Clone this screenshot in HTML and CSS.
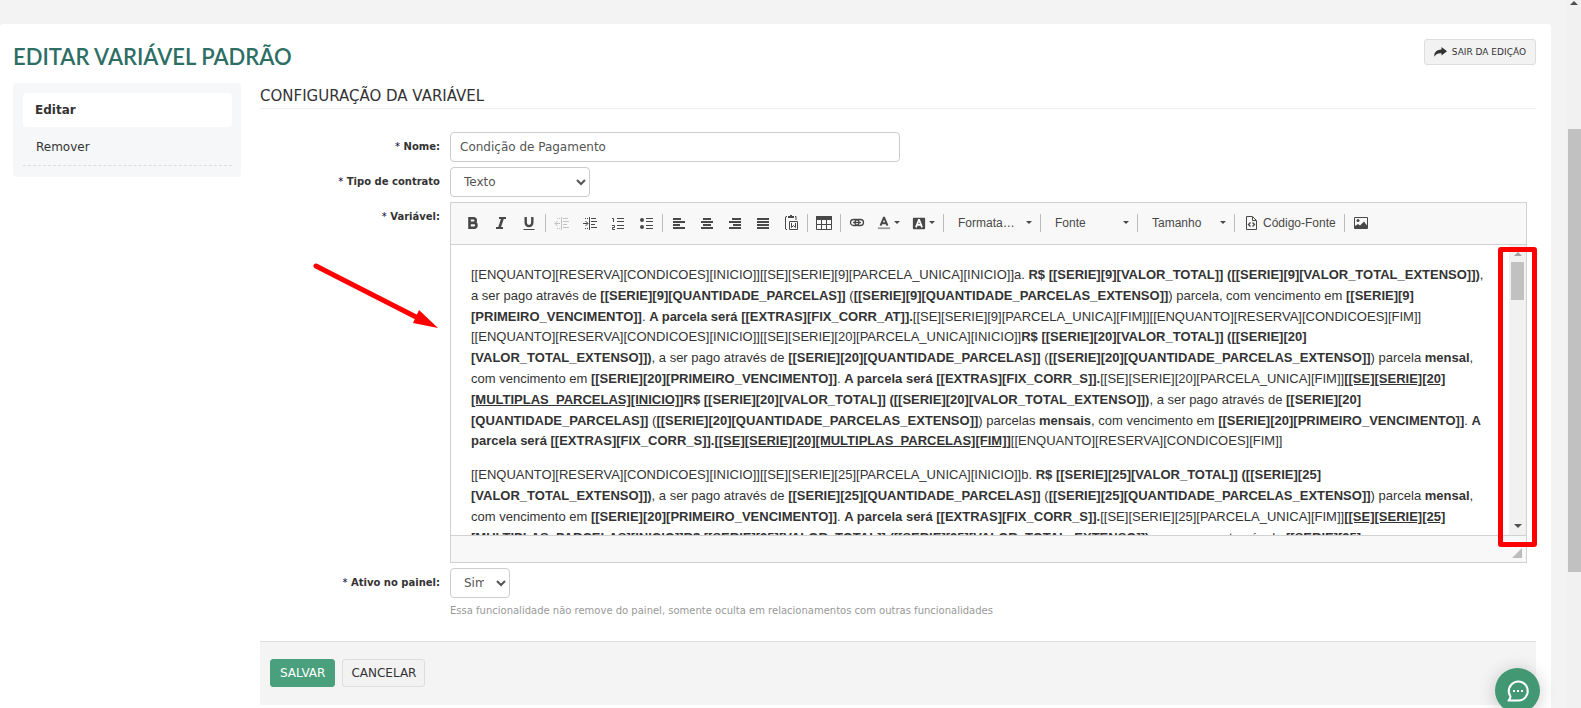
FILE: index.html
```html
<!DOCTYPE html>
<html lang="pt-BR">
<head>
  <meta charset="UTF-8">
  <meta name="viewport" content="width=device-width, initial-scale=1.0">
  <title>Editar variável padrão</title>
  <link rel="stylesheet" href="styles.css">
</head>
<body>
  <div class="page">
    <div class="panel">
      <header class="panel-header">
        <h1>Editar variável padrão</h1>
        <button type="button" class="btn small">
          <svg width="13" height="10" viewBox="0 0 13 10" fill="#333"><path d="M7.500 0L13 4.300L7.500 8.600V6.200C4 6 1.800 7 .4 9.800C-.2 5.500 2.500 2.700 7.500 2.500Z"/></svg>
          SAIR DA EDIÇÃO
        </button>
      </header>

      <div class="columns">
        <!-- Side menu -->
        <nav class="side-menu">
          <a href="#" class="active">Editar</a>
          <a href="#">Remover</a>
        </nav>

        <form class="content">
          <h2>CONFIGURAÇÃO DA VARIÁVEL</h2>

          <div class="form-row">
            <label for="nome"><span class="req">*</span> Nome:</label>
            <input type="text" id="nome" class="field" value="Condição de Pagamento">
          </div>

          <div class="form-row">
            <label for="tipo"><span class="req">*</span> Tipo de contrato</label>
            <select id="tipo" class="field select-type">
              <option>Texto</option>
            </select>
          </div>

          <div class="form-row editor-row">
            <label id="variavel-label"><span class="req">*</span> Variável:</label>
            <div class="editor">
              <!-- Toolbar -->
              <div class="toolbar">
                <button type="button" class="tool" aria-label="Negrito"><svg width="16" height="16" viewBox="0 0 16 16" fill="none" stroke="#484848" stroke-width="2.600"><path d="M4.300 3.300H8.500a2.200 2.200 0 0 1 0 4.500H4.300M4.300 7.900H9a2.400 2.400 0 0 1 0 4.900H4.300M4.500 2v12"/></svg></button>
                <button type="button" class="tool" aria-label="Itálico"><svg width="16" height="16" viewBox="0 0 16 16" fill="none" stroke="#484848" stroke-width="2"><path d="M6 3h7M3 13h7"/><path stroke-width="2.600" d="M9.700 3L6.300 13"/></svg></button>
                <button type="button" class="tool" aria-label="Sublinhado"><svg width="16" height="16" viewBox="0 0 16 16" fill="none" stroke="#484848"><path stroke-width="2.400" d="M4.700 2v5.800a3.300 3.300 0 0 0 6.600 0V2"/><path d="M2.500 14.500h11"/></svg></button>
                <span class="sep"></span>
                <button type="button" class="tool" aria-label="Diminuir recuo" disabled><svg width="16" height="16" viewBox="0 0 16 16" fill="none" stroke="#484848"><path d="M1 8.500h5M3.500 6L1 8.500L3.500 11M7.500 2v13M9 3.500h5M9 6.500h6M9 9.500h4M9 12.500h6"/><path stroke-dasharray="1 1" d="M3 3.500h4M3 13.500h4"/></svg></button>
                <button type="button" class="tool" aria-label="Aumentar recuo"><svg width="16" height="16" viewBox="0 0 16 16" fill="none" stroke="#484848"><path d="M1 8.500h5M3.500 6L6 8.500L3.500 11M7.500 2v13M9 3.500h5M9 6.500h6M9 9.500h4M9 12.500h6"/><path stroke-dasharray="1 1" d="M3 3.500h4M3 13.500h4"/></svg></button>
                <button type="button" class="tool" aria-label="Lista numerada"><svg width="16" height="16" viewBox="0 0 16 16" fill="none" stroke="#484848"><path d="M2 3.500h1.500V7M2 10.500h2.500v2h-2v2H5M7 3.500h7M7 6.500h7M7 10.500h7M7 13.500h7"/></svg></button>
                <button type="button" class="tool" aria-label="Lista com marcadores"><svg width="16" height="16" viewBox="0 0 16 16" fill="none" stroke="#484848"><path d="M8 3.500h7M8 6.500h7M8 10.500h7M8 13.500h7"/><circle cx="4" cy="5" r="2" fill="#484848" stroke="none"/><circle cx="4" cy="12" r="2" fill="#484848" stroke="none"/></svg></button>
                <span class="sep"></span>
                <button type="button" class="tool" aria-label="Alinhar à esquerda"><svg width="16" height="16" viewBox="0 0 16 16" fill="#484848"><path d="M2 3h8v2H2zM2 6h12v2H2zM2 9h7v2H2zM2 12h12v2H2z"/></svg></button>
                <button type="button" class="tool" aria-label="Centralizar"><svg width="16" height="16" viewBox="0 0 16 16" fill="#484848"><path d="M4 3h8v2H4zM2 6h12v2H2zM4 9h8v2H4zM2 12h12v2H2z"/></svg></button>
                <button type="button" class="tool" aria-label="Alinhar à direita"><svg width="16" height="16" viewBox="0 0 16 16" fill="#484848"><path d="M5 3h9v2H5zM2 6h12v2H2zM6 9h8v2H6zM2 12h12v2H2z"/></svg></button>
                <button type="button" class="tool" aria-label="Justificado"><svg width="16" height="16" viewBox="0 0 16 16" fill="#484848"><path d="M2 3h12v2H2zM2 6h12v2H2zM2 9h12v2H2zM2 12h12v2H2z"/></svg></button>
                <button type="button" class="tool" aria-label="Colar do Word"><svg width="16" height="16" viewBox="0 0 16 16" fill="none" stroke="#484848"><path d="M4 1.500H3L2.500 2v12l.5.500h1M12 1.500h1V5M6.500 6.500h8v8h-8zM8.500 8v4.500l2-2l2 2V8"/><path stroke-width="2" d="M5 2h6M7 1h2"/></svg></button>
                <span class="sep"></span>
                <button type="button" class="tool" aria-label="Tabela"><svg width="16" height="16" viewBox="0 0 16 16" fill="none" stroke="#484848"><path d="M.5 2v12.500h15V2M0 9.500h16M5.500 4v10M10.500 4v10"/><path stroke-width="4" d="M0 3h16"/></svg></button>
                <span class="sep"></span>
                <button type="button" class="tool" aria-label="Link"><svg width="16" height="16" viewBox="0 0 16 16" fill="none" stroke="#484848" stroke-width="1.300"><rect x="1.500" y="4.500" width="8.500" height="6" rx="3"/><rect x="6" y="4.500" width="8.500" height="6" rx="3"/><path d="M4 7.500h8"/></svg></button>
                <button type="button" class="tool color" aria-label="Cor do texto"><svg width="16" height="16" viewBox="0 0 16 16"><path fill="none" stroke="#484848" stroke-width="2.200" d="M4 11L7.800 2h.4L12 11M5.300 8.300h5.400"/><path fill="#999" d="M1 13h14v2H1z"/></svg><i class="arrow"></i></button>
                <button type="button" class="tool color" aria-label="Cor de fundo"><svg width="16" height="16" viewBox="0 0 16 16"><rect x="1" y="2" width="14" height="13" rx="1" fill="#484848"/><path fill="none" stroke="#fff" stroke-width="2" d="M4.500 13L7.800 4.500h.4L11.500 13M6 10h4"/></svg><i class="arrow"></i></button>
                <span class="sep"></span>
                <button type="button" class="combo">Formata… <i class="arrow"></i></button>
                <span class="sep"></span>
                <button type="button" class="combo">Fonte <i class="arrow"></i></button>
                <span class="sep"></span>
                <button type="button" class="combo">Tamanho <i class="arrow"></i></button>
                <span class="sep"></span>
                <button type="button" class="tool source"><svg width="16" height="16" viewBox="0 0 16 16" fill="none" stroke="#484848"><path d="M9.500 1.500h-6v13h10v-9zM9.500 2v3.500h3.500"/><path stroke-width="1.400" d="M7.500 7.500l-2 2l2 2M9.500 7.500l2 2l-2 2"/></svg>Código-Fonte</button>
                <span class="sep"></span>
                <button type="button" class="tool" aria-label="Imagem"><svg width="16" height="16" viewBox="0 0 16 16" fill="none" stroke="#484848"><path d="M1.500 2.500h13v11h-13z"/><path fill="#484848" stroke="none" d="M2 13V11l3-2l2 1.500L11 6.500l3 4V13z"/><circle cx="5" cy="5.500" r="1.500" fill="#484848" stroke="none"/></svg></button>
              </div>

              <!-- Editable area -->
              <div class="editor-body">
                <div class="editor-text" contenteditable="true" role="textbox" aria-labelledby="variavel-label" spellcheck="false">
                  <p>[[ENQUANTO][RESERVA][CONDICOES][INICIO]][[SE][SERIE][9][PARCELA_UNICA][INICIO]]a. <b>R$ [[SERIE][9][VALOR_TOTAL]] ([[SERIE][9][VALOR_TOTAL_EXTENSO]])</b>, a ser pago através de <b>[[SERIE][9][QUANTIDADE_PARCELAS]]</b> (<b>[[SERIE][9][QUANTIDADE_PARCELAS_EXTENSO]]</b>) parcela, com vencimento em <b>[[SERIE][9][PRIMEIRO_VENCIMENTO]]</b>. <b>A parcela será [[EXTRAS][FIX_CORR_AT]].</b>[[SE][SERIE][9][PARCELA_UNICA][FIM]][[ENQUANTO][RESERVA][CONDICOES][FIM]]<br>
                  [[ENQUANTO][RESERVA][CONDICOES][INICIO]][[SE][SERIE][20][PARCELA_UNICA][INICIO]]<b>R$ [[SERIE][20][VALOR_TOTAL]] ([[SERIE][20][VALOR_TOTAL_EXTENSO]])</b>, a ser pago através de <b>[[SERIE][20][QUANTIDADE_PARCELAS]]</b> (<b>[[SERIE][20][QUANTIDADE_PARCELAS_EXTENSO]]</b>) parcela <b>mensal</b>, com vencimento em <b>[[SERIE][20][PRIMEIRO_VENCIMENTO]]</b>. <b>A parcela será [[EXTRAS][FIX_CORR_S]].</b>[[SE][SERIE][20][PARCELA_UNICA][FIM]]<b><u>[[SE][SERIE][20][MULTIPLAS_PARCELAS][INICIO]]</u>R$ [[SERIE][20][VALOR_TOTAL]] ([[SERIE][20][VALOR_TOTAL_EXTENSO]])</b>, a ser pago através de <b>[[SERIE][20][QUANTIDADE_PARCELAS]]</b> (<b>[[SERIE][20][QUANTIDADE_PARCELAS_EXTENSO]]</b>) parcelas <b>mensais</b>, com vencimento em <b>[[SERIE][20][PRIMEIRO_VENCIMENTO]]</b>. <b>A parcela será [[EXTRAS][FIX_CORR_S]].<u>[[SE][SERIE][20][MULTIPLAS_PARCELAS][FIM]]</u></b>[[ENQUANTO][RESERVA][CONDICOES][FIM]]</p>
                  <p>[[ENQUANTO][RESERVA][CONDICOES][INICIO]][[SE][SERIE][25][PARCELA_UNICA][INICIO]]b. <b>R$ [[SERIE][25][VALOR_TOTAL]] ([[SERIE][25][VALOR_TOTAL_EXTENSO]])</b>, a ser pago através de <b>[[SERIE][25][QUANTIDADE_PARCELAS]]</b> (<b>[[SERIE][25][QUANTIDADE_PARCELAS_EXTENSO]]</b>) parcela <b>mensal</b>, com vencimento em <b>[[SERIE][20][PRIMEIRO_VENCIMENTO]]</b>. <b>A parcela será [[EXTRAS][FIX_CORR_S]].</b>[[SE][SERIE][25][PARCELA_UNICA][FIM]]<b><u>[[SE][SERIE][25][MULTIPLAS_PARCELAS][INICIO]]</u>R$ [[SERIE][25][VALOR_TOTAL]] ([[SERIE][25][VALOR_TOTAL_EXTENSO]])</b>, a ser pago através de <b>[[SERIE][25]</b></p>
                </div>
                <div class="scrollbar" aria-hidden="true">
                  <span class="scroll-up"></span>
                  <span class="scroll-thumb"></span>
                  <span class="scroll-down"></span>
                </div>
              </div>
              <div class="editor-bottom"><span class="resizer"></span></div>

              <div class="highlight"></div>
            </div>
            <svg class="pointer" width="130" height="72" viewBox="0 0 130 72"><path d="M6 6L108 58" stroke="#f00" stroke-width="5" stroke-linecap="round"/><path d="M109 50L128 68L103 63Z" fill="#f00"/></svg>
          </div>

          <div class="form-row">
            <label for="ativo"><span class="req">*</span> Ativo no painel:</label>
            <div>
              <select id="ativo" class="field select-active">
                <option>Sim</option>
              </select>
              <p class="help">Essa funcionalidade não remove do painel, somente oculta em relacionamentos com outras funcionalidades</p>
            </div>
          </div>

          <div class="form-actions">
            <button type="submit" class="btn primary">SALVAR</button>
            <button type="button" class="btn">CANCELAR</button>
          </div>
        </form>
      </div>
    </div>
  </div>

  <div class="scrollbar page-scrollbar" aria-hidden="true">
    <span class="scroll-up"></span>
    <span class="scroll-thumb"></span>
  </div>

  <button type="button" class="chat" aria-label="Chat">
    <svg width="24" height="24" viewBox="0 0 24 24" fill="none" stroke="#fff" stroke-width="2"><path d="M2.500 21.500H12.500A9.500 9.500 0 1 0 4.500 17.500Q4.500 19.500 2.500 21.500Z" stroke-linejoin="round"/><path d="M7 12h2M11 12h2M15 12h2"/></svg>
  </button>
</body>
</html>
```
FILE: styles.css
```css
* {
  box-sizing: border-box;
}
body {
  display: flex;
  height: 100vh;
  margin: 0;
  overflow: hidden;
  background-color: #f3f3f3;
  color: #333;
  font-family: Verdana, "DejaVu Sans", sans-serif;
  font-size: 12px;
}
button, input, select {
  font-family: inherit;
}
.page {
  flex: 1;
  min-width: 0;
  padding: 24px 15px 0 0;
}
.panel {
  min-height: 100%;
  padding: 15px 15px 8px 13px;
  background-color: #fff;
  border-radius: 4px;
}
.panel-header {
  display: flex;
  justify-content: space-between;
  align-items: flex-start;
  height: 44px;
}
h1 {
  margin: 0;
  padding-top: 3px;
  color: #2d6e65;
  font-family: Lato, sans-serif;
  font-size: 22px;
  font-weight: 600;
  line-height: 30px;
  text-transform: uppercase;
}
.btn {
  height: 28px;
  padding: 0 8px;
  background-color: #f2f2f2;
  color: #333;
  border: 1px solid #ddd;
  border-radius: 3px;
  font-size: 12px;
  cursor: pointer;
}
.btn.small {
  display: flex;
  align-items: center;
  gap: 5px;
  height: 26px;
  padding: 0 9px;
  font-size: 9px;
}
.btn.primary {
  padding: 0 9px;
  background-color: #4aa07c;
  border-color: #4aa07c;
  color: #fff;
}
.columns {
  display: flex;
  align-items: flex-start;
  gap: 19px;
}

/* Side menu */
.side-menu {
  width: 228px;
  padding: 10px 9px 11px 10px;
  background-color: #f5f7f9;
  border-radius: 4px;
}
.side-menu a {
  display: block;
  padding: 2px 13px 0;
  color: #333;
  line-height: 36px;
  text-decoration: none;
  border-bottom: 1px dashed #ddd;
}
.side-menu .active {
  padding: 0 12px;
  background-color: #fff;
  border: none;
  border-radius: 4px;
  font-weight: bold;
  line-height: 34px;
}

/* Form */
.content {
  flex: 1;
  min-width: 0;
}
h2 {
  margin: 0 0 23px;
  padding: 3px 0 2px;
  border-bottom: 1px solid #eee;
  font-size: 15px;
  font-weight: normal;
  line-height: 20px;
}
.form-row {
  display: grid;
  grid-template-columns: 180px 1fr;
  column-gap: 10px;
  margin-bottom: 5px;
}
.form-row label {
  padding-top: 9px;
  font-size: 10px;
  font-weight: bold;
  line-height: 12px;
  text-align: right;
}
.req {
  color: #003;
  font-weight: normal;
}
.field {
  display: block;
  width: 450px;
  height: 30px;
  padding: 0 9px;
  background-color: #fff;
  color: #555;
  border: 1px solid #ccc;
  border-radius: 4px;
  font-size: 12px;
}
.select-type {
  width: 140px;
}
.select-active {
  width: 60px;
}
.help {
  margin: 6px 0 0;
  color: #999;
  font-size: 10px;
  line-height: 14px;
}
.form-actions {
  display: flex;
  gap: 7px;
  margin-top: 23px;
  padding: 17px 10px 18px;
  background-color: #f4f4f4;
  border-top: 1px solid #ddd;
}

/* Editor */
.editor-row {
  position: relative;
}
.editor {
  position: relative;
  min-width: 0;
  margin-right: 9px;
  border: 1px solid #d1d1d1;
}
.toolbar {
  display: flex;
  align-items: center;
  height: 42px;
  padding: 0 8px 2px;
  background-color: #f8f8f8;
  border-bottom: 1px solid #d1d1d1;
}
.tool, .combo {
  display: flex;
  align-items: center;
  flex: none;
  height: 28px;
  padding: 0 6px;
  background: none;
  color: #484848;
  border: none;
  font-family: Arial, "Liberation Sans", sans-serif;
  font-size: 12px;
}
.tool:disabled {
  opacity: 0.3;
}
.tool.color {
  gap: 3px;
  width: 35px;
}
.tool.source {
  gap: 4px;
  width: 105px;
  white-space: nowrap;
}
.combo {
  justify-content: space-between;
  width: 92px;
  padding: 0 6px 0 12px;
}
.sep {
  flex: none;
  width: 1px;
  height: 18px;
  margin: 0 2px;
  background-color: #bcbcbc;
}
.arrow {
  flex: none;
  border: 3px solid transparent;
  border-top-color: #484848;
  border-bottom: none;
}
.editor-body {
  display: flex;
  height: 290px;
}
.editor-text {
  flex: 1;
  padding: 7px 20px 0;
  overflow: hidden;
  font-family: Arial, "Liberation Sans", sans-serif;
  font-size: 13px;
  line-height: 1.6;
}
.editor-text p {
  margin: 13px 0;
}
.editor-bottom {
  display: flex;
  justify-content: flex-end;
  align-items: center;
  height: 27px;
  padding: 8px 4px 0;
  background-color: #f8f8f8;
  border-top: 1px solid #d1d1d1;
}
.resizer {
  border: 5px solid #bcbcbc;
  border-top-color: transparent;
  border-left-color: transparent;
}

/* Scrollbars */
.scrollbar {
  display: flex;
  flex-direction: column;
  align-items: center;
  flex: none;
  width: 17px;
  padding: 7px 0;
  background-color: #f1f1f1;
}
.scroll-up {
  border: 4px solid transparent;
  border-bottom-color: #a3a3a3;
  border-top: none;
}
.scroll-down {
  margin-top: auto;
  border: 4px solid transparent;
  border-top-color: #505050;
  border-bottom: none;
}
.scroll-thumb {
  width: 13px;
  height: 38px;
  margin-top: 6px;
  background-color: #c1c1c1;
}
.page-scrollbar {
  align-items: flex-end;
  width: 15px;
  padding: 1px 0;
}
.page-scrollbar .scroll-up {
  margin-right: 3px;
  border-bottom-color: #505050;
}
.page-scrollbar .scroll-thumb {
  height: 443px;
  margin-top: 124px;
}

/* Marks over the page */
.highlight {
  position: absolute;
  top: 44px;
  right: -11px;
  bottom: 15px;
  width: 39px;
  border: 5px solid #f00;
  border-radius: 3px;
  pointer-events: none;
}
.pointer {
  position: absolute;
  top: 58px;
  left: 50px;
}
.chat {
  position: fixed;
  right: 41px;
  bottom: -5px;
  display: flex;
  align-items: center;
  justify-content: center;
  width: 45px;
  height: 45px;
  padding: 0;
  background-color: #419873;
  border: none;
  border-radius: 50%;
  box-shadow: 0 2px 18px rgba(0, 0, 0, 0.2);
}
```
